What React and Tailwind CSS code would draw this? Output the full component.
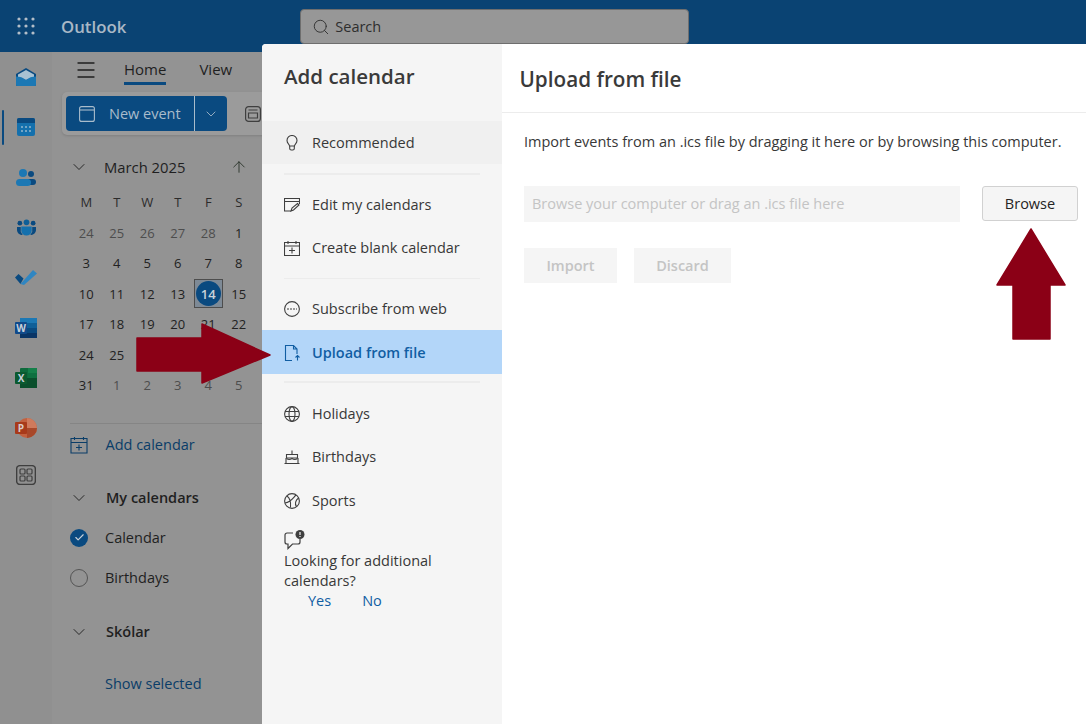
import { ChevronDown, ArrowUp, Search, Menu, Check } from "lucide-react";

const WEEKDAYS = ["M", "T", "W", "T", "F", "S"];
const WEEKS = [
  [[24, 1], [25, 1], [26, 1], [27, 1], [28, 1], [1, 0]],
  [[3, 0], [4, 0], [5, 0], [6, 0], [7, 0], [8, 0]],
  [[10, 0], [11, 0], [12, 0], [13, 0], [14, 0], [15, 0]],
  [[17, 0], [18, 0], [19, 0], [20, 0], [21, 0], [22, 0]],
  [[24, 0], [25, 0], [26, 0], [27, 0], [28, 0], [29, 0]],
  [[31, 0], [1, 1], [2, 1], [3, 1], [4, 1], [5, 1]],
];

function Svg({ children, size = 20, view = 20, className = "" }) {
  return (
    <svg width={size} height={size} viewBox={`0 0 ${view} ${view}`} fill="none" className={className}>
      {children}
    </svg>
  );
}

function Waffle() {
  return (
    <svg width="18" height="18" viewBox="0 0 18 18" fill="#b4bec8">
      {[2, 9, 16].map((y) =>
        [2, 9, 16].map((x) => <circle key={`${x}-${y}`} cx={x} cy={y} r="1.6" />)
      )}
    </svg>
  );
}

function RailIcons() {
  return (
    <div className="flex flex-col items-center">
      {/* mail */}
      <div className="flex h-[50px] w-full items-center justify-center pb-[1px]">
        <svg width="20" height="18" viewBox="0 0 20 18">
          <path d="M0 6 10 0l10 6v10.500a1.500 1.500 0 0 1-1.500 1.500h-17A1.500 1.500 0 0 1 0 16.500z" fill="#0a4a80" />
          <path d="M2 6.500 10 2l8 4.500V9l-8 3-8-3z" fill="#a9c2d3" />
          <path d="M0 8.500c4 0 7 1 10 3.500 3-2.500 6-3.500 10-3.500v8a1.500 1.500 0 0 1-1.500 1.500h-17A1.500 1.500 0 0 1 0 16.500z" fill="#1c78b4" />
        </svg>
      </div>
      {/* calendar */}
      <div className="relative flex h-[50px] w-full items-center justify-center">
        <div className="absolute top-[8px] left-[2px] h-[35px] w-[2px] rounded bg-[#0a4a80]" />
        <svg width="18" height="18" viewBox="0 0 18 18">
          <rect width="18" height="18" rx="2" fill="#1470ad" />
          <path d="M0 5V2a2 2 0 0 1 2-2h14a2 2 0 0 1 2 2v3z" fill="#0a4a80" />
          {[5, 9, 13].map((x) => [9, 13].map((y) => <rect key={`${x}${y}`} x={x - 0.8} y={y - 0.8} width="1.600" height="1.600" fill="#a9c2d3" />))}
        </svg>
      </div>
      {/* people */}
      <div className="flex h-[50px] w-full items-center justify-center">
        <svg width="20" height="17" viewBox="0 0 20 17">
          <circle cx="15" cy="5" r="3" fill="#0a4a80" />
          <rect x="10" y="10" width="10" height="6" rx="3" fill="#0a4a80" />
          <circle cx="7" cy="4" r="4" fill="#1c78b4" />
          <rect x="0" y="10" width="15" height="7" rx="3.500" fill="#1c78b4" />
        </svg>
      </div>
      {/* groups */}
      <div className="flex h-[50px] w-full items-center justify-center">
        <svg width="19" height="17" viewBox="0 0 20 17">
          <circle cx="3" cy="4" r="2.500" fill="#0a4a80" />
          <circle cx="17" cy="4" r="2.500" fill="#0a4a80" />
          <circle cx="10" cy="3" r="3" fill="#0f5f98" />
          <path d="M0 8h4v5l2 3.500C3 16.500 0 14 0 11z" fill="#0a4a80" />
          <path d="M20 8h-4v5l-2 3.500c3 0 6-2.500 6-5.500z" fill="#0a4a80" />
          <path d="M4.500 7.500h11V12a5.500 5 0 0 1-11 0z" fill="#1470ad" />
        </svg>
      </div>
      {/* todo */}
      <div className="flex h-[50px] w-full items-center justify-center">
        <svg width="22" height="16" viewBox="0 0 22 16">
          <path d="M0 8.500 3.500 5l5 4.500L5.500 15z" fill="#0a4a80" />
          <path d="M5.500 15 18 1l4 3.500L9 16z" fill="#2f86c2" />
        </svg>
      </div>
      {/* word */}
      <div className="flex h-[50px] w-full items-center justify-center pt-[2px]">
        <svg width="22" height="20" viewBox="0 0 22 20">
          <rect x="5" width="17" height="20" rx="1" fill="#0f5f98" />
          <rect x="5" y="0" width="17" height="5" fill="#1c78b4" />
          <rect x="5" y="10" width="17" height="5" fill="#0a4a80" />
          <rect x="5" y="15" width="17" height="5" fill="#0a3566" />
          <rect y="4" width="12" height="12" rx="1" fill="#114a8a" />
          <text x="6" y="13.500" textAnchor="middle" fontFamily="'Open Sans', sans-serif" fontSize="10" fontWeight="700" fill="#c8d0da">W</text>
        </svg>
      </div>
      {/* excel */}
      <div className="flex h-[50px] w-full items-center justify-center pt-[2px]">
        <svg width="22" height="20" viewBox="0 0 22 20">
          <rect x="5" width="17" height="20" rx="1" fill="#0e6a3c" />
          <rect x="13" y="0" width="9" height="5" fill="#15804a" />
          <rect x="13" y="5" width="9" height="5" fill="#0e7040" />
          <rect x="5" y="10" width="17" height="10" fill="#0a4f2c" />
          <rect y="4" width="12" height="12" rx="1" fill="#0b5a30" />
          <text x="6" y="13.500" textAnchor="middle" fontFamily="'Open Sans', sans-serif" fontSize="10" fontWeight="700" fill="#c8d0da">X</text>
        </svg>
      </div>
      {/* powerpoint */}
      <div className="flex h-[50px] w-full items-center justify-center pt-[2px]">
        <svg width="22" height="20" viewBox="0 0 22 20">
          <circle cx="12" cy="10" r="10" fill="#c2613f" />
          <path d="M12 10V0a10 10 0 0 1 10 10z" fill="#cf7a5c" />
          <path d="M12 10h10a10 10 0 0 1-10 10z" fill="#a8482a" />
          <rect y="4" width="12" height="12" rx="1" fill="#a83a1a" />
          <text x="6" y="13.500" textAnchor="middle" fontFamily="'Open Sans', sans-serif" fontSize="10" fontWeight="700" fill="#d8ccc8">P</text>
        </svg>
      </div>
      {/* more apps */}
      <div className="flex h-[46px] w-full items-center justify-center">
        <svg width="20" height="20" viewBox="0 0 20 20" fill="none" stroke="#3f3f3f" strokeWidth="1.200">
          <rect x="0.600" y="0.600" width="18.800" height="18.800" rx="3.500" strokeWidth="1.500" />
          <rect x="4" y="4" width="5" height="5" rx="1" />
          <rect x="11" y="4" width="5" height="5" rx="1" />
          <rect x="4" y="11" width="5" height="5" rx="1" />
          <rect x="11" y="11" width="5" height="5" rx="1" />
        </svg>
      </div>
    </div>
  );
}

function CalendarGrid() {
  return (
    <div className="ml-[19px] grid w-[183px] grid-cols-6 text-center text-[13px] leading-[30.5px]">
      {WEEKDAYS.map((d, i) => (
        <div key={i} className="text-[#2b2b2b]">{d}</div>
      ))}
      {WEEKS.flat().map(([n, muted], i) => {
        if (n === 14) {
          return (
            <div key={i} className="flex h-[30.5px] items-center justify-center">
              <div className="flex h-[29px] w-[29px] items-center justify-center border border-[#4d4d4d] bg-[#7e8a96]">
                <div className="flex h-[25px] w-[25px] items-center justify-center rounded-full bg-[#0a4a80] font-semibold text-[#c9d2da]">14</div>
              </div>
            </div>
          );
        }
        return (
          <div key={i} className={muted ? "text-[#4d4d4d]" : "text-[#222222]"}>{n}</div>
        );
      })}
    </div>
  );
}

function Sidebar() {
  return (
    <div className="min-w-0 flex-1 text-[14.500px] text-[#1f1f1f]">
      <div className="flex h-[40px] items-start pt-[6px]">
        <Menu size={24} strokeWidth={1.300} className="ml-[22px] text-[#1f1f1f]" />
        <div className="ml-[26px] border-b-[3px] border-[#0a4a80] pb-[2px] text-[15px] font-medium leading-[22px]">Home</div>
        <div className="ml-[33px] text-[15px] leading-[22px]">View</div>
      </div>
      <div className="ml-[10px] flex h-[43px] items-center rounded-l-[5px] bg-[#9b9b9b] pl-[4px] shadow-sm">
        <div className="flex h-[35px] w-[161px] items-center rounded-[4px] bg-[#0a4a80] text-[#a9bccb]">
          <svg width="16" height="16" viewBox="0 0 16 16" fill="none" stroke="#a9bccb" strokeWidth="1.100" className="ml-[13px]">
            <rect x="0.600" y="0.600" width="14.800" height="14.800" rx="2" />
            <path d="M1 4h14" />
          </svg>
          <span className="ml-[14px]">New event</span>
          <div className="ml-[13.500px] flex h-full flex-1 items-center justify-center border-l border-[#a9bccb]">
            <ChevronDown size={16} strokeWidth={1.300} />
          </div>
        </div>
        <svg width="16" height="16" viewBox="0 0 16 16" fill="none" stroke="#3f3f3f" strokeWidth="1.200" className="ml-[18px]">
          <rect x="0.600" y="0.600" width="14.800" height="14.800" rx="3" />
          <path d="M3.500 4h9M3.500 7h9v5h-9z" />
        </svg>
      </div>

      <div className="mt-[20px] flex h-[24px] items-center text-[14.800px] font-medium">
        <ChevronDown size={20} strokeWidth={1.100} className="ml-[17px]" />
        <span className="ml-[15px]">March 2025</span>
        <ArrowUp size={18} strokeWidth={1.100} className="ml-[44.500px] text-[#1f2a1f]" />
      </div>
      <div className="mt-[8px]">
        <CalendarGrid />
      </div>

      <div className="mt-[22px] ml-[18px] h-px bg-[#858585]" />
      <div className="mt-[1px] flex h-[40px] items-center text-[#0a3d68]">
        <svg width="18" height="18" viewBox="0 0 18 18" fill="none" stroke="#0a3d68" strokeWidth="1.100" className="ml-[18px]">
          <path d="M1 2.500h16v14.500H1zM1 6.500h16M4.500 1v3M13.500 1v3M9 8.500v6M6 11.500h6" />
        </svg>
        <span className="ml-[17.500px]">Add calendar</span>
      </div>

      <div className="mt-[21px] flex h-[24px] items-center font-semibold">
        <ChevronDown size={20} strokeWidth={1.100} className="ml-[17px]" />
        <span className="ml-[17px]">My calendars</span>
      </div>
      <div className="mt-[16px] flex h-[24px] items-center">
        <div className="ml-[18px] flex h-[18px] w-[18px] items-center justify-center rounded-full bg-[#0a4a80]">
          <Check size={11} strokeWidth={2.500} className="text-[#c9d2da]" />
        </div>
        <span className="ml-[17px]">Calendar</span>
      </div>
      <div className="mt-[16px] flex h-[24px] items-center">
        <div className="ml-[18px] h-[18px] w-[18px] rounded-full border border-[#555555]" />
        <span className="ml-[17px]">Birthdays</span>
      </div>
      <div className="mt-[30px] flex h-[24px] items-center font-semibold">
        <ChevronDown size={20} strokeWidth={1.100} className="ml-[17px]" />
        <span className="ml-[17px]">Skólar</span>
      </div>
      <div className="mt-[29px] ml-[53px] text-[#0a3d68]">Show selected</div>
    </div>
  );
}

function NavItem({ icon, label, className = "h-[43.500px]" }) {
  return (
    <div className={`flex items-center pl-[22px] ${className}`}>
      <div className="flex w-[16px] justify-center">{icon}</div>
      <span className="ml-[12px]">{label}</span>
    </div>
  );
}

function AddCalendarModal() {
  const stroke = { stroke: "#3f3f3f", strokeWidth: 1.1 };
  return (
    <div className="absolute top-[44px] right-0 bottom-0 left-[262px] flex overflow-hidden rounded-tl-[4px] bg-white text-[14.500px] text-[#383838]">
      <div className="flex w-[240px] flex-col bg-[#f5f5f5]">
        <div className="mt-[16px] ml-[22px] h-[61px] text-[20.500px] font-semibold leading-[32px] text-[#3a3a3a]">Add calendar</div>
        <NavItem
          className="h-[43px] bg-[#f0f0f0]"
          label="Recommended"
          icon={
            <Svg size={16} view={16}>
              <path d="M5.500 11c0-1.500-2.500-2.500-2.500-5.500a5 5 0 0 1 10 0c0 3-2.500 4-2.500 5.500zM5.700 11v2.500a1.500 1.500 0 0 0 1.500 1.500h1.600a1.500 1.500 0 0 0 1.500-1.500V11" {...stroke} />
            </Svg>
          }
        />
        <div className="mx-[22px] mt-[9px] h-[1.500px] bg-[#ececec]" />
        <div className="mt-[9px]">
          <NavItem
            label="Edit my calendars"
            icon={
              <Svg size={16} view={16}>
                <path d="M7 14H.5V1.500h15V7M.5 4.500h15M7 14l1-3 5.500-4.500 1.500 1.500L9.500 13z" {...stroke} />
              </Svg>
            }
          />
          <NavItem
            className="h-[42.500px]"
            label="Create blank calendar"
            icon={
              <Svg size={16} view={16}>
                <path d="M.5 2.500h15v13H.5zM.5 6h15M4 1v3M12 1v3M8 7.500v6M5 10.500h6" {...stroke} />
              </Svg>
            }
          />
        </div>
        <div className="mx-[22px] mt-[8px] h-[1.500px] bg-[#ececec]" />
        <div className="mt-[9px]">
          <NavItem
            className="h-[42px]"
            label="Subscribe from web"
            icon={
              <Svg size={16} view={16}>
                <circle cx="8" cy="8" r="7.400" {...stroke} />
                <path d="M3 8h10" stroke="#3f3f3f" strokeDasharray="2 1" />
              </Svg>
            }
          />
        </div>
        <div className="flex h-[44px] items-center bg-[#b3d6f9] pt-[1px] pl-[22px] font-semibold text-[#115ea3]">
          <Svg size={16} view={16}>
            <path d="M8 15.500H1.500V.5h8L13 4v5M9.500.5V4H13M13.500 15.500v-5M11.500 12.500l2-2 2 2" stroke="#115ea3" strokeWidth="1.100" />
          </Svg>
          <span className="ml-[12px]">Upload from file</span>
        </div>
        <div className="mx-[22px] mt-[7px] h-[2px] bg-[#ececec]" />
        <div className="mt-[9px]">
          <NavItem
            label="Holidays"
            icon={
              <Svg size={16} view={16}>
                <circle cx="8" cy="8" r="7.400" {...stroke} />
                <ellipse cx="8" cy="8" rx="3" ry="7.400" {...stroke} />
                <path d="M1 5.500h14M1 10.500h14" {...stroke} />
              </Svg>
            }
          />
          <NavItem
            label="Birthdays"
            icon={
              <Svg size={16} view={16}>
                <path d="M8 1.500v4M2.500 5.500h11V9h-11zM.5 14.500h15M2 9v5.500M14 9v5.500" {...stroke} />
                <path d="M2.500 9.500c2 1.500 3.500 1.500 5.500 0 2 1.500 3.500 1.500 5.500 0" {...stroke} />
              </Svg>
            }
          />
          <NavItem
            label="Sports"
            icon={
              <Svg size={16} view={16}>
                <circle cx="8" cy="8" r="7.400" {...stroke} />
                <path d="M3 3c3 2 4 6 3.500 11.500M12 2C9 5 7 9 1 10M14.500 5c-3 2-4 6-2 8.500" {...stroke} />
              </Svg>
            }
          />
        </div>
        <div className="ml-[22px] mt-[7px] w-[190px]">
          <svg width="22" height="20" viewBox="0 0 22 20" fill="none" className="block">
            <path d="M9 3H3a2 2 0 0 0-2 2v7a2 2 0 0 0 2 2h1v4.500L8.500 14H14a2 2 0 0 0 2-2V9" {...stroke} strokeWidth="1.200" />
            <circle cx="16" cy="4.500" r="4.500" fill="#3f3f3f" />
            <path d="M16 2v3M16 6v1" stroke="#f5f5f5" strokeWidth="1.200" />
          </svg>
          <div className="mt-[1px] leading-[20px]">Looking for additional calendars?</div>
          <div className="flex leading-[20px] text-[#115ea3]">
            <span className="ml-[24px]">Yes</span>
            <span className="ml-[31px]">No</span>
          </div>
        </div>
      </div>

      <div className="min-w-0 flex-1">
        <div className="flex h-[69px] items-center border-b border-[#ececec] pt-[4px] pl-[17.500px] text-[20.700px] font-semibold text-[#3a3a3a]">
          Upload from file
        </div>
        <div className="pr-[8px] pl-[22px]">
          <p className="mt-[19px] whitespace-nowrap leading-[20px]">Import events from an .ics file by dragging it here or by browsing this computer.</p>
          <div className="mt-[34px] flex items-start">
            <div className="flex h-[36px] w-[436px] items-center bg-[#f5f5f5] pl-[8px] text-[#c4c4c4]">
              Browse your computer or drag an .ics file here
            </div>
            <button className="ml-[22px] h-[35px] w-[96px] rounded-[3px] border border-[#d1d1d1] bg-[#f5f5f5] font-medium text-[#242424]">Browse</button>
          </div>
          <div className="mt-[26px] flex font-semibold text-[#c4c4c4]">
            <div className="flex h-[35px] w-[93px] items-center justify-center bg-[#f5f5f5]">Import</div>
            <div className="ml-[17px] flex h-[35px] w-[97px] items-center justify-center bg-[#f5f5f5]">Discard</div>
          </div>
        </div>
      </div>
    </div>
  );
}

export default function App() {
  return (
    <div className="relative h-[724px] w-[1086px] overflow-hidden bg-[#939393] font-['Open_Sans',sans-serif]">
      <div className="flex h-[52px] bg-[#0a4373]">
        <div className="flex w-[52px] items-center justify-center"><Waffle /></div>
        <div className="ml-[9px] flex items-center pt-[2px] text-[16.800px] font-semibold text-[#a9b8c6]">Outlook</div>
        <div className="ml-[174px] mt-[9px] flex h-[35px] w-[389px] items-center rounded-[4px] border border-[#6e6e6e] bg-[#979797] text-[14.500px] text-[#2e2e2e]">
          <Search size={18} strokeWidth={1.200} className="ml-[11px]" />
          <span className="ml-[5px]">Search</span>
        </div>
      </div>
      <div className="flex h-[672px]">
        <div className="w-[52px] bg-[#909090]">
          <RailIcons />
        </div>
        <Sidebar />
      </div>

      <AddCalendarModal />

      {/* annotation arrows */}
      <svg className="absolute top-0 left-0" width="1086" height="724" fill="#8b0016" stroke="#8b0016" strokeWidth="1.500" strokeLinejoin="round">
        <path d="M137 338h65v-14l68 31-68 28v-12h-65z" />
        <path d="M1031 229l34 56h-15v54h-37v-54h-16z" />
      </svg>
    </div>
  );
}
